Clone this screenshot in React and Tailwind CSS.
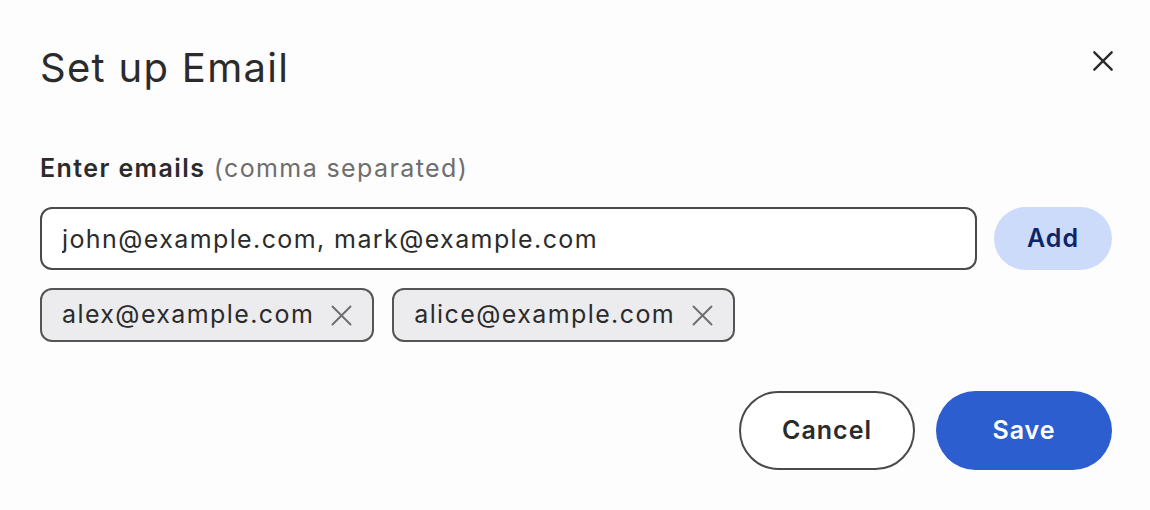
import React, { useState } from 'react';

const XIcon = ({ className, strokeWidth = 2 }) => (
  <svg viewBox="0 0 24 24" className={className} fill="none" stroke="currentColor" strokeWidth={strokeWidth} strokeLinecap="round">
    <path d="M4 4l16 16M20 4L4 20" />
  </svg>
);

const App = () => {
  const [input, setInput] = useState('john@example.com, mark@example.com');
  const [emails, setEmails] = useState(['alex@example.com', 'alice@example.com']);

  return (
    <div className="w-[1150px] h-[510px] bg-[#fdfdfd] text-[#2b2b2b] pl-[40px] pr-[38px] pt-[40px]" style={{ fontFamily: 'Inter, "Noto Sans", sans-serif' }}>
      {/* Header */}
      <div className="flex items-center justify-between h-[56px]">
        <h1 className="text-[40px] leading-none font-normal tracking-[1.3px]">Set up Email</h1>
        <button className="w-[26px] h-[26px] flex items-center justify-center text-[#2b2b2b] -mr-[4px] -mt-[15px]">
          <XIcon className="w-[26px] h-[26px]" strokeWidth={2.2} />
        </button>
      </div>

      {/* Label */}
      <div className="mt-[57px] text-[25px] leading-[30px] tracking-[1.4px]">
        <span className="font-semibold">Enter emails</span>{' '}
        <span className="text-[#6e6e6e]">(comma separated)</span>
      </div>

      {/* Input row */}
      <div className="flex items-center gap-[17px] mt-[24px]">
        <input
          value={input}
          onChange={(e) => setInput(e.target.value)}
          className="flex-1 h-[63px] border-2 border-[#4a4a4a] rounded-[12px] px-[20px] text-[25px] tracking-[1.4px] text-[#2b2b2b] bg-white outline-none"
        />
        <button className="w-[118px] h-[63px] rounded-full bg-[#cddbfa] text-[#0f2466] text-[25px] tracking-[1px] font-semibold">
          Add
        </button>
      </div>

      {/* Chips */}
      <div className="flex gap-[18px] mt-[18px]">
        {emails.map((email) => (
          <div
            key={email}
            className="flex items-center h-[54px] pl-[20px] pr-[17px] gap-[14px] bg-[#ececee] border-2 border-[#555] rounded-[12px] text-[25px] tracking-[1.4px] text-[#2b2b2b]"
          >
            <span>{email}</span>
            <button onClick={() => setEmails(emails.filter((e) => e !== email))} className="text-[#6e6e6e]">
              <XIcon className="w-[27px] h-[27px]" strokeWidth={1.7} />
            </button>
          </div>
        ))}
      </div>

      {/* Footer */}
      <div className="flex justify-end gap-[21px] mt-[49px]">
        <button className="w-[176px] h-[79px] rounded-full border-2 border-[#4a4a4a] bg-white text-[25px] tracking-[1px] font-semibold text-[#2b2b2b]">
          Cancel
        </button>
        <button className="w-[176px] h-[79px] rounded-full bg-[#2c5ed0] text-[25px] tracking-[1px] font-semibold text-white">
          Save
        </button>
      </div>
    </div>
  );
};

export default App;
